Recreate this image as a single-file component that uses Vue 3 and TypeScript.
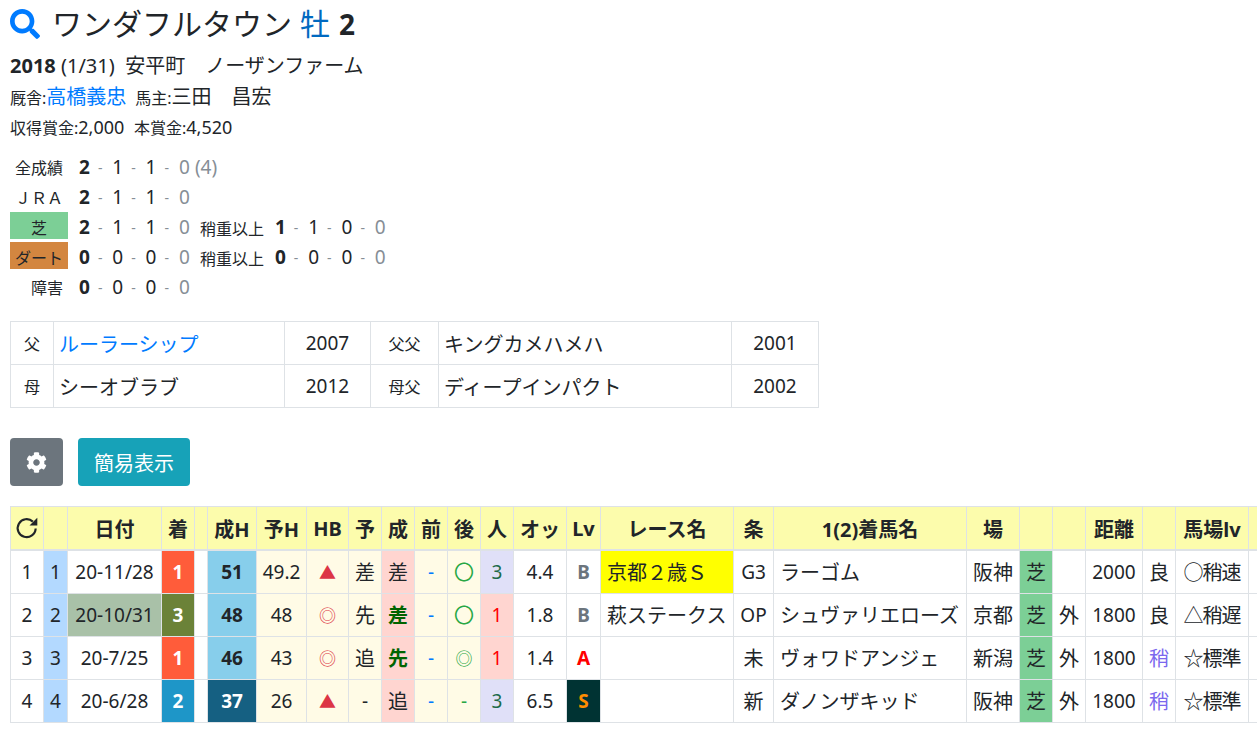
<script setup lang="ts">
interface Cell {
  t?: string
  c?: string
}

const widths = [33, 24, 94, 33, 13, 49, 50, 42, 33, 33, 33, 33, 33, 53, 34, 133, 40, 193, 53, 33, 33, 57, 33, 73, 40]
const heads = ['', '', '日付', '着', '', '成H', '予H', 'HB', '予', '成', '前', '後', '人', 'オッ', 'Lv', 'レース名', '条', '1(2)着馬名', '場', '', '', '距離', '', '馬場lv', '上']

const rows: Cell[][] = [
  [
    { t: '1' }, { t: '1', c: 'no' }, { t: '20-11/28' }, { t: '1', c: 'r1' }, {}, { t: '51', c: 'h1' }, { t: '49.2', c: 'iv' },
    { t: '▲', c: 'iv mark' }, { t: '差', c: 'iv' }, { t: '差', c: 'pk' }, { t: '-', c: 'iv blue' }, { t: '〇', c: 'iv green' },
    { t: '3', c: 'pop3' }, { t: '4.4' }, { t: 'B', c: 'lvb' }, { t: '京都２歳Ｓ', c: 'name g3' }, { t: 'G3' }, { t: 'ラーゴム', c: 'name' },
    { t: '阪神' }, { t: '芝', c: 'turf' }, {}, { t: '2000' }, { t: '良' }, { t: '○稍速', c: 'going' }, {},
  ],
  [
    { t: '2' }, { t: '2', c: 'no' }, { t: '20-10/31', c: 'sage' }, { t: '3', c: 'r3' }, {}, { t: '48', c: 'h1' }, { t: '48', c: 'iv' },
    { t: '◎', c: 'iv mark dbl' }, { t: '先', c: 'iv' }, { t: '差', c: 'pk hit' }, { t: '-', c: 'iv blue' }, { t: '〇', c: 'iv green' },
    { t: '1', c: 'pop1' }, { t: '1.8' }, { t: 'B', c: 'lvb' }, { t: '萩ステークス', c: 'name' }, { t: 'OP' }, { t: 'シュヴァリエローズ', c: 'name' },
    { t: '京都' }, { t: '芝', c: 'turf' }, { t: '外' }, { t: '1800' }, { t: '良' }, { t: '△稍遅', c: 'going' }, {},
  ],
  [
    { t: '3' }, { t: '3', c: 'no' }, { t: '20-7/25' }, { t: '1', c: 'r1' }, {}, { t: '46', c: 'h1' }, { t: '43', c: 'iv' },
    { t: '◎', c: 'iv mark dbl' }, { t: '追', c: 'iv' }, { t: '先', c: 'pk hit' }, { t: '-', c: 'iv blue' }, { t: '◎', c: 'iv green dbl' },
    { t: '1', c: 'pop1' }, { t: '1.4' }, { t: 'A', c: 'lva' }, { c: 'name' }, { t: '未' }, { t: 'ヴォワドアンジェ', c: 'name' },
    { t: '新潟' }, { t: '芝', c: 'turf' }, { t: '外' }, { t: '1800' }, { t: '稍', c: 'soft' }, { t: '☆標準', c: 'going' }, {},
  ],
  [
    { t: '4' }, { t: '4', c: 'no' }, { t: '20-6/28' }, { t: '2', c: 'r2' }, {}, { t: '37', c: 'h2' }, { t: '26', c: 'iv' },
    { t: '▲', c: 'iv mark' }, { t: '-', c: 'iv' }, { t: '追', c: 'pk' }, { t: '-', c: 'iv blue' }, { t: '-', c: 'iv green' },
    { t: '3', c: 'pop3' }, { t: '6.5' }, { t: 'S', c: 'lvs' }, { c: 'name' }, { t: '新' }, { t: 'ダノンザキッド', c: 'name' },
    { t: '阪神' }, { t: '芝', c: 'turf' }, { t: '外' }, { t: '1800' }, { t: '稍', c: 'soft' }, { t: '☆標準', c: 'going' }, {},
  ],
]

const tableWidth = widths.reduce((a, b) => a + b, 0) + 1

// latin text sits a little smaller than the kana next to it
const isLatin = (t?: string) => !!t && /^[\w.\-/]+$/.test(t)

const stats = [
  { label: '全成績', cls: '', a: [2, 1, 1, 0], extra: '(4)' },
  { label: 'ＪＲＡ', cls: '', a: [2, 1, 1, 0] },
  { label: '芝', cls: 'turf-label', a: [2, 1, 1, 0], sub: [1, 1, 0, 0] },
  { label: 'ダート', cls: 'dirt-label', a: [0, 0, 0, 0], sub: [0, 0, 0, 0] },
  { label: '障害', cls: '', a: [0, 0, 0, 0] },
]
</script>

<template>
  <div class="page">
    <h1 class="title">
      <svg class="search" viewBox="0 0 512 512" width="30" height="30">
        <path fill="#007bff" d="M505 442.700L405.300 343c-4.500-4.500-10.600-7-17-7H372c27.600-35.300 44-79.700 44-128C416 93.100 322.900 0 208 0S0 93.100 0 208s93.100 208 208 208c48.300 0 92.700-16.400 128-44v16.300c0 6.400 2.500 12.500 7 17l99.700 99.700c9.400 9.400 24.600 9.400 33.900 0l28.300-28.300c9.400-9.400 9.400-24.600.1-34zM208 336c-70.700 0-128-57.200-128-128 0-70.700 57.200-128 128-128 70.700 0 128 57.200 128 128 0 70.700-57.200 128-128 128z" />
      </svg>
      <span class="horse">ワンダフルタウン</span>
      <span class="sex">牡</span>
      <b class="age">2</b>
    </h1>

    <p class="birth"><b>2018</b> (1/31)&nbsp; 安平町　ノーザンファーム</p>
    <p class="owner">
      <small>厩舎:</small><a class="link">高橋義忠</a>
      <small class="gap">馬主:</small>三田　昌宏
    </p>
    <p class="prize">
      <small>収得賞金:</small>2,000
      <small class="gap2">本賞金:</small>4,520
    </p>

    <div class="stats">
      <div v-for="s in stats" :key="s.label" class="stat-row">
        <div class="stat-label" :class="s.cls">{{ s.label }}</div>
        <div class="score">
          <span v-for="(n, i) in s.a" :key="i" class="num" :class="{ first: i === 0, last: i === 3 }">{{ n }}<i v-if="i < 3">-</i></span>
        </div>
        <span v-if="s.extra" class="extra">{{ s.extra }}</span>
        <template v-if="s.sub">
          <span class="sub-label">稍重以上</span>
          <div class="score">
            <span v-for="(n, i) in s.sub" :key="i" class="num" :class="{ first: i === 0, last: i === 3 }">{{ n }}<i v-if="i < 3">-</i></span>
          </div>
        </template>
      </div>
    </div>

    <table class="pedigree">
      <colgroup>
        <col style="width: 43px" />
        <col style="width: 231px" />
        <col style="width: 86px" />
        <col style="width: 68px" />
        <col style="width: 293px" />
        <col style="width: 87px" />
      </colgroup>
      <tbody>
        <tr>
          <td class="rel">父</td>
          <td class="pname"><a class="link">ルーラーシップ</a></td>
          <td class="year">2007</td>
          <td class="rel">父父</td>
          <td class="pname">キングカメハメハ</td>
          <td class="year">2001</td>
        </tr>
        <tr>
          <td class="rel">母</td>
          <td class="pname">シーオブラブ</td>
          <td class="year">2012</td>
          <td class="rel">母父</td>
          <td class="pname">ディープインパクト</td>
          <td class="year">2002</td>
        </tr>
      </tbody>
    </table>

    <div class="buttons">
      <button class="btn gear" type="button">
        <svg viewBox="0 0 512 512" width="21" height="21">
          <path fill="#fff" d="M487.400 315.700l-42.600-24.600c4.300-23.200 4.300-47 0-70.200l42.600-24.600c4.900-2.800 7.100-8.600 5.500-14-11.100-35.600-30-67.800-54.700-94.600-3.800-4.100-10-5.100-14.800-2.300L380.800 110c-17.900-15.400-38.500-27.300-60.800-35.100V25.800c0-5.600-3.900-10.500-9.400-11.700-36.700-8.200-74.300-7.800-109.200 0-5.500 1.200-9.400 6.100-9.400 11.700V75c-22.200 7.900-42.800 19.800-60.800 35.100L88.700 85.500c-4.900-2.800-11-1.900-14.800 2.300-24.700 26.700-43.600 58.900-54.700 94.600-1.700 5.400.6 11.200 5.500 14L67.300 221c-4.300 23.200-4.300 47 0 70.200l-42.600 24.600c-4.900 2.800-7.100 8.600-5.500 14 11.100 35.600 30 67.800 54.700 94.600 3.800 4.100 10 5.100 14.800 2.300l42.600-24.600c17.900 15.400 38.500 27.300 60.800 35.100v49.200c0 5.600 3.900 10.500 9.400 11.700 36.700 8.200 74.300 7.800 109.200 0 5.500-1.200 9.400-6.100 9.400-11.700v-49.200c22.200-7.900 42.800-19.800 60.800-35.100l42.600 24.600c4.900 2.800 11 1.900 14.800-2.300 24.700-26.700 43.600-58.900 54.700-94.600 1.500-5.500-.7-11.300-5.600-14.100zM256 336c-44.100 0-80-35.900-80-80s35.900-80 80-80 80 35.900 80 80-35.900 80-80 80z" />
        </svg>
      </button>
      <button class="btn simple" type="button">簡易表示</button>
    </div>

    <div class="table-wrap">
      <table class="races" :style="{ width: tableWidth + 'px' }">
        <colgroup>
          <col v-for="(w, i) in widths" :key="i" :style="{ width: w + 'px' }" />
        </colgroup>
        <thead>
          <tr>
            <th v-for="(h, i) in heads" :key="i" :class="{ orange: i === 24 }">
              <svg v-if="i === 0" class="reload" viewBox="0 0 24 24" width="26" height="26">
                <path fill="none" stroke="#212529" stroke-width="2" d="M20 12.500a8.300 8.300 0 1 1-2.600-6.400" />
                <path fill="#212529" d="M21.500 2.500v7.200h-7.200z" />
              </svg>
              <template v-else>{{ h }}</template>
            </th>
          </tr>
        </thead>
        <tbody>
          <tr v-for="(row, r) in rows" :key="r">
            <td v-for="(cell, i) in row" :key="i" :class="[cell.c, { latin: isLatin(cell.t) }]">{{ cell.t }}</td>
          </tr>
        </tbody>
      </table>
    </div>
  </div>
</template>

<style>
html,
body {
  margin: 0;
  overflow: hidden;
  background: #fff;
}
</style>

<style scoped>
.page {
  width: 1257px;
  height: 730px;
  overflow: hidden;
  padding: 0 0 0 10px;
  box-sizing: border-box;
  font-family: "Noto Sans", "Noto Sans CJK JP", sans-serif;
  color: #212529;
  font-size: 20px;
}

.title {
  display: flex;
  align-items: center;
  height: 48px;
  margin: 0;
  font-size: 30px;
  font-weight: 400;
  line-height: 48px;
  white-space: nowrap;
}
.search {
  margin-right: 12px;
}
.horse {
  margin-right: 8px;
}
.sex {
  color: #0069c0;
  margin-right: 9px;
}
.age {
  font-size: 28px;
  font-weight: 700;
}

p {
  margin: 0;
  white-space: nowrap;
}
.birth {
  height: 36px;
  line-height: 36px;
}
.owner {
  height: 30px;
  line-height: 26px;
}
.prize {
  height: 30px;
  line-height: 26px;
  font-size: 18px;
}
small {
  font-size: 16px;
}
.gap {
  margin-left: 9px;
}
.gap2 {
  margin-left: 5px;
}
.link {
  color: #007bff;
  text-decoration: none;
}

.stats {
  display: flex;
  flex-direction: column;
  gap: 3px;
  margin-top: 8px;
  font-size: 19px;
}
.stat-row {
  display: flex;
  align-items: center;
  height: 27px;
  white-space: nowrap;
}
.stat-label {
  width: 58px;
  height: 27px;
  line-height: 32px;
  padding-right: 5px;
  box-sizing: border-box;
  text-align: right;
  font-size: 16px;
  flex: none;
}
.turf-label {
  background: #7ccf96;
  text-align: center;
  padding-right: 0;
}
.dirt-label {
  background: #d38640;
  text-align: center;
  padding-right: 0;
}
.score {
  display: flex;
  margin-left: 11px;
  padding-top: 3px;
}
.num {
  width: 33.3px;
  display: flex;
  align-items: center;
}
.num.last {
  width: 11px;
  color: #868e96;
}
.num.first {
  font-weight: 700;
}
.num i {
  font-style: normal;
  font-weight: 400;
  font-size: 14px;
  color: #868e96;
  margin-left: 8px;
}
.extra {
  color: #868e96;
  margin-left: 5px;
  padding-top: 3px;
}
.sub-label {
  font-size: 16px;
  margin-left: 10px;
  padding-top: 4px;
}

.pedigree {
  table-layout: fixed;
  width: 809px;
  margin-top: 22px;
  border-collapse: collapse;
}
.pedigree td {
  height: 43px;
  padding: 0;
  border: 1px solid #dee2e6;
  box-sizing: border-box;
}
.rel {
  text-align: center;
  font-size: 16px;
}
.pname {
  font-size: 20px;
  padding-left: 5px !important;
  white-space: nowrap;
}
.year {
  text-align: center;
  font-size: 19px;
}

.buttons {
  display: flex;
  gap: 15px;
  margin-top: 30px;
}
.btn {
  height: 48px;
  border: 0;
  border-radius: 4px;
  color: #fff;
  font-family: inherit;
  font-size: 20px;
  padding: 0;
}
.gear {
  width: 53px;
  background: #6c757d;
}
.gear svg {
  display: block;
  margin: 0 auto;
}
.simple {
  width: 112px;
  background: #17a2b8;
}

.table-wrap {
  margin-top: 20px;
}
.races {
  table-layout: fixed;
  border-collapse: collapse;
  font-size: 20px;
}
.races th,
.races td {
  padding: 0;
  border: 1px solid #dee2e6;
  text-align: center;
  white-space: nowrap;
  overflow: hidden;
}
.races th {
  height: 42px;
  border-bottom-width: 2px;
  background: #fcfcac;
  font-weight: 700;
  font-size: 20px;
}
.races th.orange {
  color: #f08c00;
}
.reload {
  display: block;
  margin: 0 auto;
}
.races td {
  height: 43px;
  box-sizing: border-box;
}
.races td.latin {
  font-size: 19px;
}
.races .no {
  background: #b3d9ff;
}
.races .sage {
  background: #a9c1a8;
}
.races .r1,
.races .r2,
.races .r3 {
  color: #fff;
  font-weight: 700;
}
.races .r1 {
  background: #ff5c3a;
}
.races .r2 {
  background: #1e96c8;
}
.races .r3 {
  background: #6b8238;
}
.races .h1 {
  background: #87ceeb;
  font-weight: 700;
}
.races .h2 {
  background: #156082;
  color: #fff;
  font-weight: 700;
}
.races .iv {
  background: #fffbe6;
}
.races .pk {
  background: #ffd5d0;
}
.races .hit {
  color: #006400;
  font-weight: 700;
}
.races .mark {
  color: #dc3545;
  font-size: 17px;
}
.races .dbl {
  font-size: 17px;
}
.races .blue {
  color: #007bff;
}
.races .green {
  color: #28a745;
}
.races .pop3 {
  background: #e0e0f8;
  color: #1d6b4a;
}
.races .pop1 {
  background: #ffd5d0;
  color: #ff0000;
}
.races .lvb {
  color: #6c757d;
  font-weight: 700;
}
.races .lva {
  color: #ff0000;
  font-weight: 700;
}
.races .lvs {
  background: #003333;
  color: #ff8c00;
  font-weight: 700;
}
.races .name {
  text-align: left;
  padding-left: 6px;
}
.races .g3 {
  background: #ffff00;
}
.races .turf {
  background: #7ccf96;
}
.races .soft {
  color: #7b68ee;
}
.races .going {
  letter-spacing: -1px;
}
</style>
